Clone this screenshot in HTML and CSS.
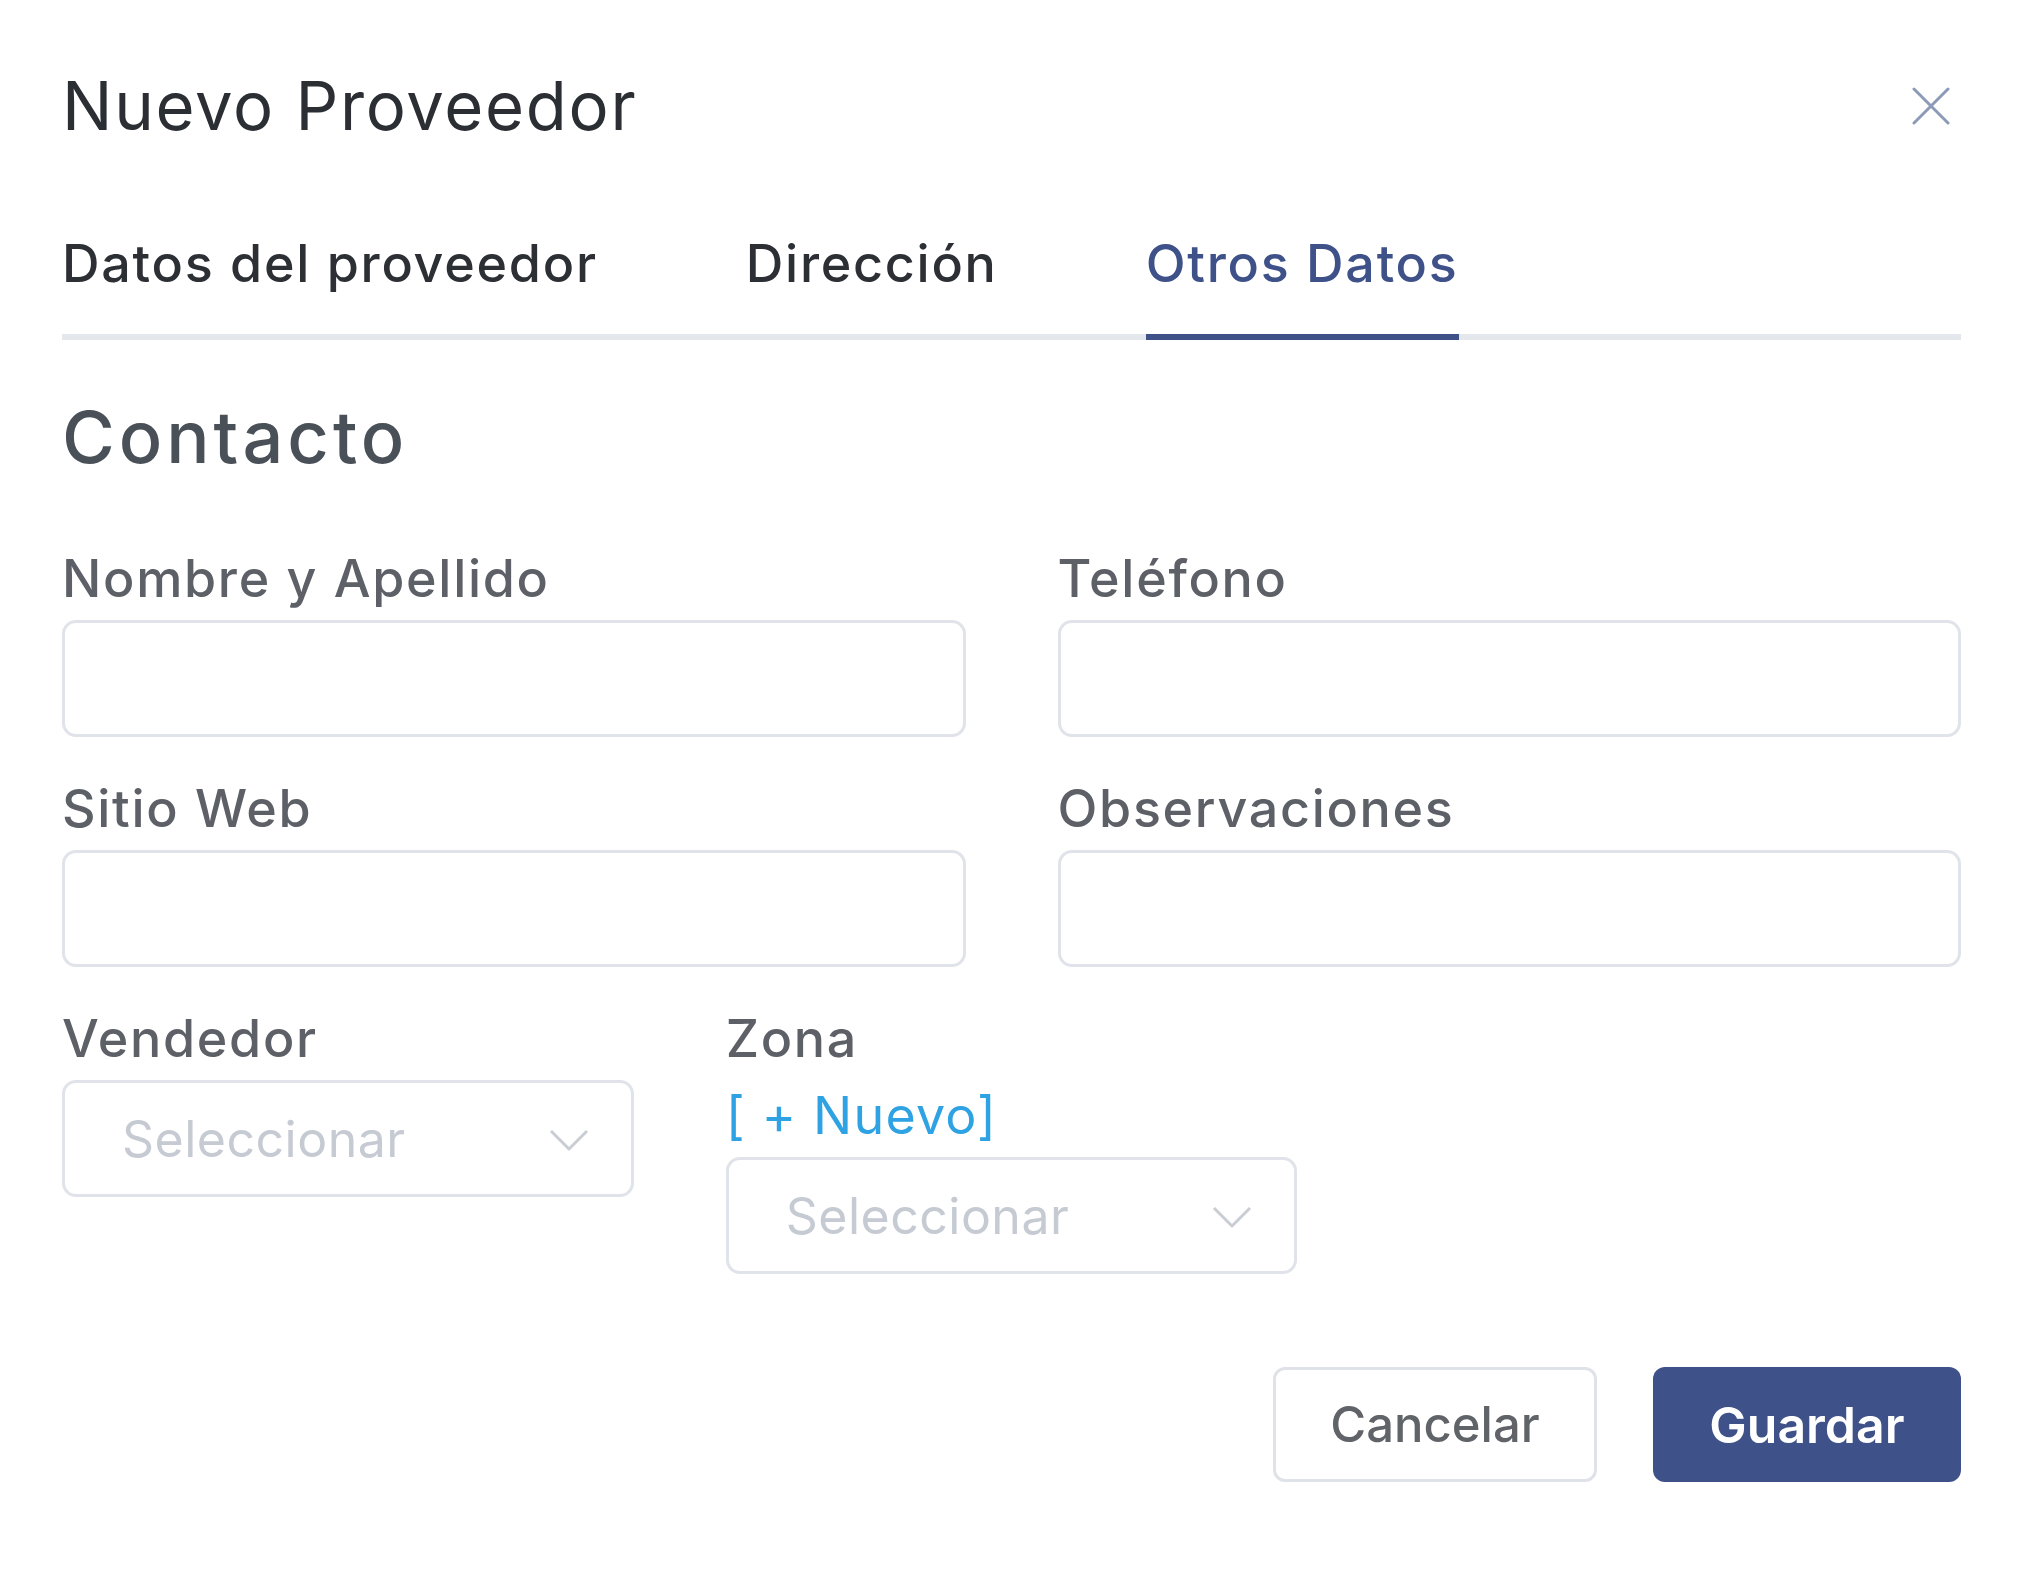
FILE: index.html
```html
<!DOCTYPE html>
<html lang="es">
<head>
<meta charset="utf-8">
<title>Nuevo Proveedor</title>
<link rel="stylesheet" href="styles.css">
</head>
<body>
<div class="modal">
  <header class="modal-header">
    <h1 class="title">Nuevo Proveedor</h1>
    <button class="close" type="button" aria-label="Cerrar">
      <svg width="38" height="38" viewBox="0 0 38 38"><path d="M2 2 L36 36 M36 2 L2 36" stroke="#8d9ab7" stroke-width="3" stroke-linecap="round" fill="none"/></svg>
    </button>
  </header>

  <nav class="tabs">
    <a class="tab">Datos del proveedor</a>
    <a class="tab">Dirección</a>
    <a class="tab active">Otros Datos</a>
  </nav>

  <section class="section">
    <h2 class="section-title">Contacto</h2>

    <div class="grid2">
      <div class="field">
        <label class="label">Nombre y Apellido</label>
        <input class="input" type="text">
      </div>
      <div class="field">
        <label class="label">Teléfono</label>
        <input class="input" type="text">
      </div>
      <div class="field">
        <label class="label">Sitio Web</label>
        <input class="input" type="text">
      </div>
      <div class="field">
        <label class="label">Observaciones</label>
        <input class="input" type="text">
      </div>
    </div>

    <div class="grid3">
      <div class="field">
        <label class="label">Vendedor</label>
        <div class="select">
          <span class="placeholder">Seleccionar</span>
          <svg class="chevron" width="40" height="22" viewBox="0 0 40 22"><path d="M2 2 L20 20 L38 2" stroke="#c9cdd4" stroke-width="3" fill="none" stroke-linejoin="round"/></svg>
        </div>
      </div>
      <div class="field">
        <label class="label">Zona</label>
        <a class="link">[ + Nuevo]</a>
        <div class="select">
          <span class="placeholder">Seleccionar</span>
          <svg class="chevron" width="40" height="22" viewBox="0 0 40 22"><path d="M2 2 L20 20 L38 2" stroke="#c9cdd4" stroke-width="3" fill="none" stroke-linejoin="round"/></svg>
        </div>
      </div>
    </div>
  </section>

  <footer class="actions">
    <button class="btn btn-cancel" type="button">Cancelar</button>
    <button class="btn btn-primary" type="button">Guardar</button>
  </footer>
</div>
</body>
</html>
```
FILE: styles.css
```css
* { box-sizing: border-box; }

html, body {
  margin: 0;
  background: #ffffff;
}

body {
  font-family: "Inter", "Noto Sans", sans-serif;
  color: #2b2e33;
}

.modal {
  padding: 66px 67px 0 62px;
}

.modal-header {
  display: flex;
  align-items: center;
  justify-content: space-between;
}

.title {
  margin: 0;
  font-size: 67px;
  line-height: 80px;
  font-weight: 400;
  letter-spacing: 1.7px;
  color: #2b2e33;
}

.close {
  width: 60px;
  height: 60px;
  padding: 0;
  border: 0;
  background: transparent;
  display: flex;
  align-items: center;
  justify-content: center;
}

.tabs {
  display: flex;
  gap: 148px;
  margin-top: 87px;
  border-bottom: 6px solid #e4e7ec;
}

.tab {
  font-size: 52px;
  line-height: 62px;
  font-weight: 500;
  letter-spacing: 1.75px;
  color: #2c2f34;
  padding-bottom: 39px;
  margin-bottom: -6px;
  border-bottom: 6px solid transparent;
}

.tab.active {
  color: #3f5189;
  border-bottom-color: #3f5189;
}

.section-title {
  margin: 54px 0 68px;
  font-size: 72px;
  line-height: 86px;
  font-weight: 500;
  letter-spacing: 4px;
  color: #4a5058;
}

.grid2 {
  display: grid;
  grid-template-columns: 1fr 1fr;
  column-gap: 92px;
  row-gap: 41px;
}

.grid3 {
  display: grid;
  grid-template-columns: 1fr 1fr 1fr;
  column-gap: 92px;
  margin-top: 41px;
  align-items: start;
}

.field {
  display: flex;
  flex-direction: column;
}

.label {
  font-size: 52px;
  line-height: 62px;
  font-weight: 500;
  letter-spacing: 1.7px;
  color: #5d6167;
  margin-bottom: 10px;
}

.link {
  font-size: 52px;
  line-height: 62px;
  font-weight: 400;
  letter-spacing: 1.2px;
  color: #2ea2e2;
  margin-top: 5px;
  margin-bottom: 10px;
}

.input {
  width: 100%;
  height: 117px;
  border: 3px solid #e0e3e9;
  border-radius: 14px;
  background: #fff;
  font: inherit;
  outline: none;
}

.select {
  height: 117px;
  border: 3px solid #e0e3e9;
  border-radius: 14px;
  background: #fff;
  display: flex;
  align-items: center;
  justify-content: space-between;
  padding: 0 42px 0 57px;
}

.placeholder {
  font-size: 50px;
  font-weight: 400;
  letter-spacing: 0.5px;
  color: #c6cad2;
}

.chevron {
  display: block;
  margin-top: 2px;
}

.actions {
  display: flex;
  justify-content: flex-end;
  gap: 56px;
  margin-top: 93px;
}

.btn {
  height: 115px;
  border-radius: 12px;
  font-family: inherit;
  display: flex;
  align-items: center;
  justify-content: center;
  padding: 0;
}

.btn-cancel {
  width: 324px;
  background: #fff;
  border: 3px solid #dfe2e8;
  font-size: 49px;
  font-weight: 500;
  color: #606469;
}

.btn-primary {
  width: 308px;
  background: #3f5189;
  border: 0;
  font-size: 50px;
  font-weight: 600;
  color: #ffffff;
}
```
